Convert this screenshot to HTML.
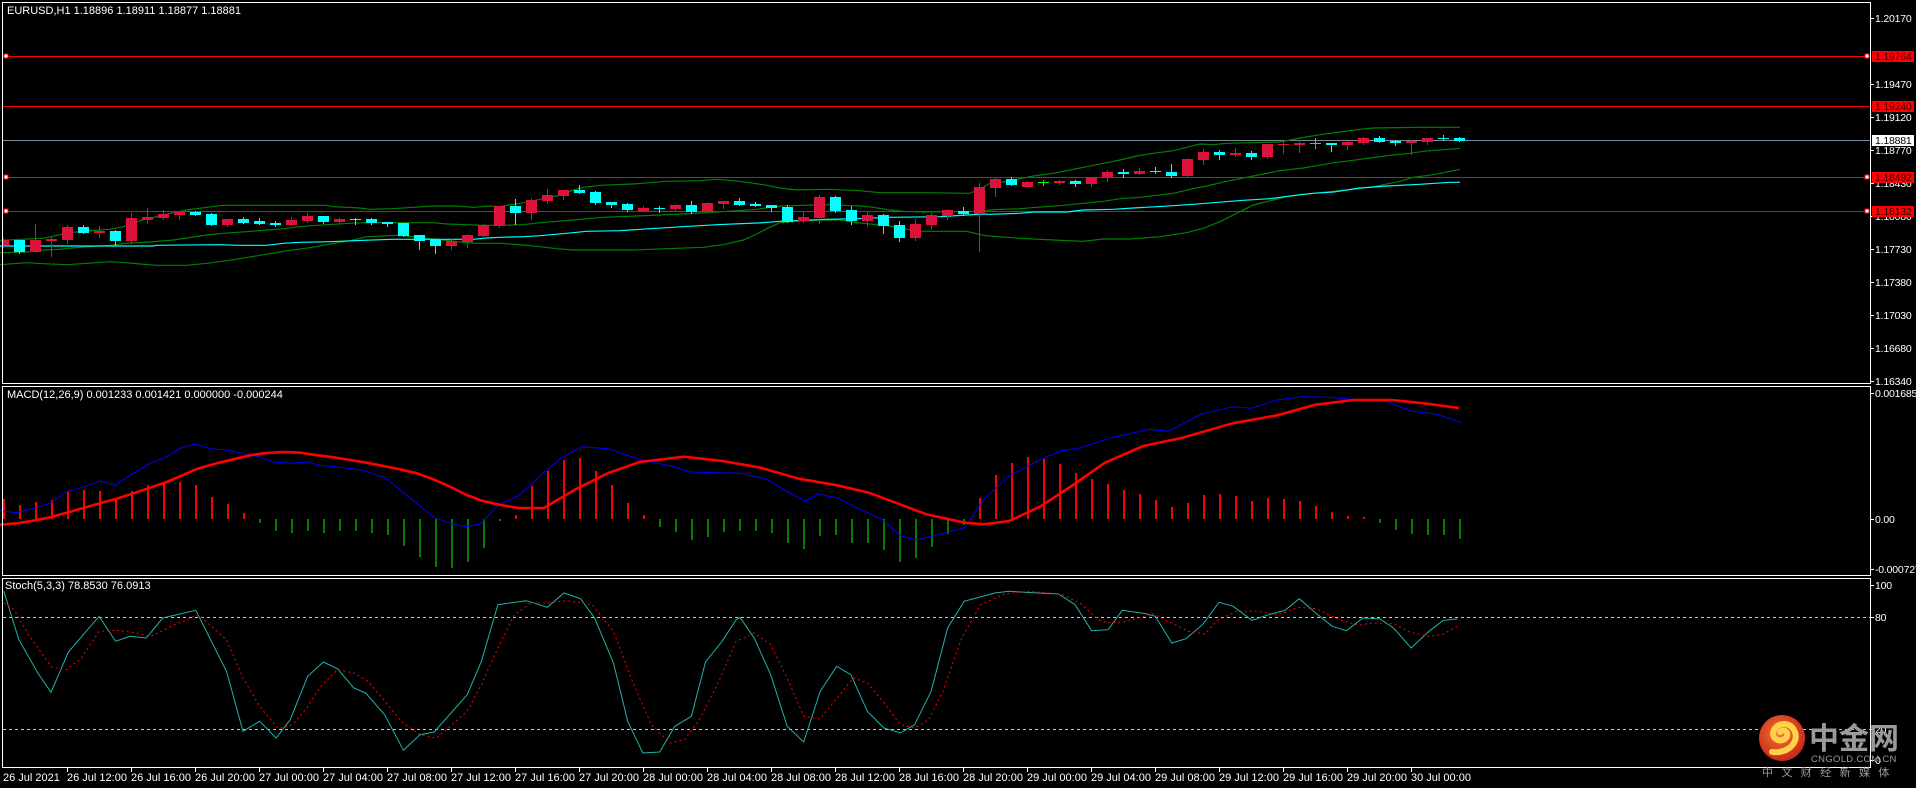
<!DOCTYPE html>
<html><head><meta charset="utf-8">
<style>
html,body{margin:0;padding:0;background:#000;width:1916px;height:788px;overflow:hidden}
svg{display:block}
text{font-family:"Liberation Sans","Noto Sans CJK SC",sans-serif;font-size:11px;fill:#fff}
text.ax{font-size:10.5px;letter-spacing:-0.2px}
</style></head>
<body>
<svg id="s" width="1916" height="788" xmlns="http://www.w3.org/2000/svg">
<rect width="1916" height="788" fill="#000"/>
<g id="g"></g>
<g fill="none" stroke="#fff" stroke-width="1">
<rect x="2.5" y="2.5" width="1868" height="381"/>
<rect x="2.5" y="386.5" width="1868" height="189"/>
<rect x="2.5" y="578.5" width="1868" height="189"/>
</g>
<text x="7" y="14">EURUSD,H1  1.18896 1.18911 1.18877 1.18881</text>
<text x="7" y="398">MACD(12,26,9) 0.001233 0.001421 0.000000 -0.000244</text>
<text x="5" y="589">Stoch(5,3,3) 78.8530 76.0913</text>
<defs><radialGradient id="lg" cx="0.45" cy="0.4" r="0.6"><stop offset="0" stop-color="#f07a2a"/><stop offset="1" stop-color="#c8281a"/></radialGradient></defs>
<circle cx="1782" cy="738" r="23" fill="url(#lg)"/>
<path d="M1772 752 C1790 754 1800 740 1794 730 C1790 722 1778 722 1774 730 C1770 738 1780 744 1786 738 C1790 733 1784 728 1780 732" fill="none" stroke="#ffd04a" stroke-width="6" stroke-linecap="round"/>
<text x="1809" y="749" style="font-size:30px;font-weight:bold;fill:#9a9a9a">中金网</text>
<text x="1811" y="762" style="font-size:9.5px;fill:#9a9a9a;letter-spacing:0.3px">CNGOLD.COM.CN</text>
<text x="1762" y="776" style="font-size:11px;fill:#9a9a9a;letter-spacing:8.4px">中文财经新媒体</text>
</svg>
<script>
var G=document.getElementById('g'),h='';
function L(x1,y1,x2,y2,c,w,extra){h+='<line x1="'+x1+'" y1="'+y1+'" x2="'+x2+'" y2="'+y2+'" stroke="'+c+'" stroke-width="'+(w||1)+'" '+(extra||'')+'/>';}
function R(x,y,w,hh,c){h+='<rect x="'+x+'" y="'+y+'" width="'+w+'" height="'+hh+'" fill="'+c+'"/>';}
function T(x,y,t,c,cls){h+='<text x="'+x+'" y="'+y+'"'+(cls?' class="'+cls+'"':'')+(c?' style="fill:'+c+'"':'')+'>'+t+'</text>';}
function P(pts,c,w,extra){var d=pts.map(function(p,i){return (i?'L':'M')+p[0].toFixed(1)+' '+p[1].toFixed(1)}).join('');h+='<path d="'+d+'" fill="none" stroke="'+c+'" stroke-width="'+(w||1)+'" '+(extra||'')+'/>';}
function conv(a,ox,sx,oy,sy){var r=[];for(var i=0;i<a.length;i+=2)r.push([ox+a[i]/sx,oy+a[i+1]/sy]);return r;}
function merge(){var r=[];for(var i=0;i<arguments.length;i++)r=r.concat(arguments[i]);r.sort(function(a,b){return a[0]-b[0]});return r;}

L(3,140.5,1870,140.5,'#778899');
[56,106,177,211].forEach(function(y){L(3,y+0.5,1870,y+0.5,'#ff0000');});
[56,177,211].forEach(function(y){h+='<rect x="4" y="'+(y-2)+'" width="4" height="4" fill="#fff" stroke="#f00"/>';h+='<rect x="1865" y="'+(y-2)+'" width="4" height="4" fill="#fff" stroke="#f00"/>';});

var z7={u:[0,211,130,205,200,190,250,183,330,178,370,170,420,152,470,140,520,128,560,120,620,112,670,106,850,106,980,106,1000,110,1080,114,1110,118,1180,116,1240,112,1300,108,1370,108,1420,112,1470,108],
m:[0,248,80,246,130,240,180,238,240,232,330,226,380,220,450,216,520,210,620,195,670,190,740,185,800,180,850,176,900,170,950,166,1050,160,1100,158,1300,158,1340,162,1450,166],
l:[0,284,80,278,130,281,200,284,260,280,330,275,380,278,420,282,470,286,560,286,620,280,680,272,720,266,780,256,850,244,930,233,990,222,1050,212,1100,200,1190,196,1240,200,1290,206,1330,210,1380,216,1430,220],
a:[0,228,460,228,470,226,660,224,710,226,800,226,850,220,900,217,990,215,1090,211,1180,208,1420,208,1460,204]};
var z8={u:[30,110,50,106,100,98,150,88,200,78,250,60,280,52,330,46,430,42,530,34,630,32,680,28,730,32,780,38,830,46,870,54,920,60,1010,58,1110,62,1170,68,1300,68,1440,70,1480,52],
m:[30,166,100,164,150,158,250,150,340,142,440,138,580,132,680,126,740,122,800,118,870,108,1000,104,1060,106,1110,108,1150,112,1200,120,1240,124,1300,126,1480,124],
l:[30,220,100,225,150,230,200,236,250,240,430,240,530,236,640,232,700,224,760,210,800,192,830,176,870,158,920,154,1000,150,1050,150,1100,158,1200,168,1280,184,1430,184,1480,196],
a:[30,202,100,200,150,197,230,190,290,184,390,182,480,176,580,170,680,164,820,158,870,154,1010,148,1100,146,1200,142,1350,140,1480,132]};
var z9={u:[30,190,70,186,120,176,160,168,220,160,270,150,320,140,370,130,420,120,470,108,520,100,580,92,620,82,660,72,700,74,740,70,820,68,900,66,960,54,1020,44,1080,36,1140,28,1180,24,1320,22,1440,22],
m:[30,270,70,268,120,266,170,262,250,256,310,250,370,244,420,236,480,232,530,226,580,220,630,208,680,198,740,184,800,172,850,162,900,152,970,144,1050,130,1110,122,1170,114,1230,106,1290,100,1330,94,1440,85],
l:[30,348,120,355,220,360,310,364,370,357,450,357,540,350,620,338,670,325,720,305,770,280,820,255,880,240,920,230,1000,220,1100,210,1180,200,1260,184,1300,172,1360,164,1440,148],
a:[30,283,120,280,160,276,260,276,310,270,400,268,460,264,550,259,640,253,700,248,790,241,870,236,900,232,960,224,1000,220,1060,216,1140,204,1220,198,1320,193,1410,187,1440,187]};
['u','m','l'].forEach(function(k){P(merge(conv(z7[k],0,3,170,3),conv(z8[k],490,3,170,3),conv(z9[k],980,3,120,3)),'#008000',1.2);});
P(merge(conv(z7.a,0,3,170,3),conv(z8.a,490,3,170,3),conv(z9.a,980,3,120,3)),'#00ffff',1.2);

var C=[['r',210,225,205,232],['c',210,245,210,248],['r',210,245,162,245],['r',207,213,200,258],['r',171,210,165,218],['c',171,189,165,189],['r',183,189,168,200],['c',183,213,180,225],['r',144,213,129,220],['r',141,150,114,159],
['r',132,144,120,147],['r',125,135,125,147],['c',125,135,122,135],['c',132,165,129,165],['r',147,165,147,168],['c',147,159,141,159],['c',153,162,144,162],['c',159,165,153,168],['r',150,165,141,165],['r',138,153,129,156],
['c',138,156,138,159],['r',147,156,144,159],['c',147,150,144,162],['c',147,159,144,162],['c',156,162,156,168],['c',159,198,159,198],['c',195,213,195,237],['c',207,228,207,249],['r',213,228,204,237],['r',195,216,192,231],
['r',165,198,162,204],['r',108,168,108,171],['c',108,129,87,162],['r',90,129,84,147],['r',75,93,57,99],['r',60,78,60,87],['c',60,69,45,69],['c',66,99,63,102],['c',96,105,96,111],['c',102,120,99,123],
['r',114,123,108,123],['c',114,117,108,126],['r',105,117,102,120],['c',105,126,93,129],['r',99,126,96,126],['r',93,102,93,114],['c',93,105,84,105],['c',102,108,96,108],['c',105,114,105,123],['c',111,156,105,156],
['r',141,153,126,156],['r',81,144,75,159],['c',81,123,78,126],['c',120,153,108,162],['r',135,153,126,168],['c',135,168,132,189],['c',165,204,153,213],['r',162,204,147,210],['r',135,165,129,174],['r',120,138,117,147],
['c',123,132,111,135],['r',51,132,39,243],
['r',177,204,171,228],['c',177,195,171,195],['r',186,201,183,201],['g',186,188,180,194],['r',183,189,180,192],['c',183,192,180,198],['r',171,192,171,198],['r',156,171,150,183],['c',156,162,147,171],['r',153,162,144,162],
['c',153,156,141,159],['c',156,168,132,171],['r',117,168,114,168],['r',96,120,87,132],['c',96,105,90,117],['r',99,105,84,108],['c',99,111,93,117],['r',72,111,72,114],['r',72,75,66,99],['r',69,75,60,96],
['g',69,71,54,84],['c',69,75,69,93],['r',66,75,63,87],['r',54,69,51,72],['c',54,66,48,66],['c',63,69,60,75],['r',63,69,60,102],['r',54,66,54,72],['c',54,57,45,60],['c',54,63,51,63]];
var col={r:'#dc143c',c:'#00ffff',g:'#00ff00'};
C.forEach(function(d,i){var oy=i<=61?170:120;var x=3+16*i;var bt=oy+d[1]/3,bb=oy+d[2]/3,wt=oy+d[3]/3,wb=oy+d[4]/3;var c=col[d[0]];
 L(x+0.5,Math.round(wt),x+0.5,Math.round(wb)+1,c);
 var y1=Math.round(bt),y2=Math.max(Math.round(bb),y1+1);
 if(d[0]=='g'){L(x-5,y1+0.5,x+6,y1+0.5,c);}else R(Math.max(3,x-5),y1,x<8?x+6-3:11,y2-y1,c);});

var H=[499,505,502,500,491,490,491,499,491,485,482,482,485,497,504,513,523,531,533,531,533,531,531,533,535,546,557,567,568,562,548,521,515,486,471,460,458,471,485,503,515,527,532,540,537,532,531,531,533,543,549,536,535,543,543,550,562,558,547,534,525,498,475,463,457,459,464,473,479,484,490,494,500,507,503,495,494,496,501,498,499,501,506,512,516,517,523,530,534,535,535,539];
H.forEach(function(y,i){var x=3+16*i;if(y<519)R(x,y,2,519-y,'#ff0000');else R(x,519,2,y-519,'#008000');});
var mb=merge(conv([0,422,50,428,100,415,150,400,200,365,250,350,300,333,345,346,400,310,450,280,500,260,540,235,585,222,630,236,680,240,720,248,780,262,820,276,870,280,920,276,960,286,1000,290,1060,296,1100,304,1160,326,1200,360,1250,400,1300,440,1350,460,1400,470,1440,462],0,3,370,3),
conv([0,415,30,355,60,330,100,260,130,212,160,182,200,188,250,220,300,240,330,258,370,260,410,262,450,280,480,315,510,345,530,325,560,335,590,365,630,400,660,450,685,462,720,445,760,425,790,340,830,270,880,220,910,195,940,186,990,155,1050,130,1080,136,1130,85,1180,62,1210,67,1250,42,1290,32,1330,34,1380,42,1420,45,1460,75,1500,85,1540,110],480,1.568,386,3));
var mr=merge(conv([0,464,50,460,100,452,150,442,200,428,250,414,300,400,350,386,400,370,450,353,500,336,550,315,590,297,650,280,700,268,750,256,790,250,850,246,900,248,940,254,1000,262,1050,270,1100,278,1150,288,1200,298,1250,310,1300,328,1350,350,1400,375,1440,390],0,3,370,3),
conv([0,343,30,356,60,366,100,366,150,310,200,262,250,228,320,212,380,225,440,245,500,278,560,298,610,320,660,356,700,385,760,410,790,415,830,405,880,360,930,297,980,230,1040,180,1100,156,1180,112,1250,88,1310,56,1370,42,1430,42,1480,52,1535,66],480,1.568,386,3));
P(mb,'#0000ff',1);P(mr,'#ff0000',2.6);

L(3,617.5,1870,617.5,'#c8c8c8',1,'stroke-dasharray="3,3"');L(3,729.5,1870,729.5,'#c8c8c8',1,'stroke-dasharray="3,3"');
var sm=merge(conv([8,40,40,185,80,285,108,343,145,222,210,115,245,190,275,175,310,180,345,120,415,97,480,280,515,460,550,430,585,480,615,425,652,295,685,252,715,272,750,330,775,345,815,410,855,517,890,470,920,462,990,350,1020,250,1055,80,1115,68,1160,88,1195,45,1230,62,1260,120,1300,255,1330,430,1362,525,1398,522,1430,445,1465,415,1495,252,1530,190,1560,125],0,2.119,578,3),
conv([0,118,30,180,65,290,100,445,135,492,170,340,205,265,235,290,270,400,305,450,340,465,370,440,405,340,440,150,475,70,540,45,570,40,630,45,675,48,710,80,745,158,780,155,810,97,860,107,880,115,915,195,945,182,980,140,1015,73,1045,85,1085,127,1120,110,1155,97,1185,62,1220,105,1255,145,1285,158,1320,120,1355,122,1385,150,1422,210,1460,160,1490,127,1520,123],740,2.119,578,3));
var ss=merge(conv([8,75,30,95,60,170,110,268,140,275,170,245,210,160,250,157,290,165,320,175,370,140,420,110,480,185,515,300,550,385,590,452,620,440,650,390,680,325,715,275,750,285,780,310,810,360,850,430,890,470,925,480,950,450,990,400,1020,320,1050,225,1090,110,1125,75,1160,75,1200,68,1255,80,1300,160,1340,310,1380,440,1420,495,1450,485,1480,430,1520,320,1560,190],0,2.119,578,3),
conv([0,185,30,165,65,200,100,300,135,415,170,423,200,370,240,300,270,315,300,365,340,440,370,450,400,425,430,340,470,180,510,80,560,48,610,40,680,48,720,75,760,125,780,135,820,130,875,107,900,125,950,160,985,168,1010,130,1050,100,1095,100,1140,110,1185,88,1220,92,1270,125,1310,142,1340,135,1385,137,1420,163,1460,175,1490,168,1520,145],740,2.119,578,3));
P(sm,'#20b2aa',1);P(ss,'#ff0000',1,'stroke-dasharray="2,3"');

[['1.20170',18],['1.19470',84],['1.19120',117],['1.18770',150],['1.18430',183],['1.18080',216],['1.17730',249],['1.17380',282],['1.17030',315],['1.16680',348],['1.16340',381],['0.001685',393],['0.00',519],['-0.000727',569],['100',585],['80',617],['20',729],['0',760]].forEach(function(a){L(1871,a[1]+0.5,1874,a[1]+0.5,'#fff');T(1875,a[1]+4,a[0],null,'ax');});
[['1.19764',56],['1.19240',106],['1.18492',177],['1.18132',211]].forEach(function(a){R(1872,a[1]-5,42,11,'#ff0000');T(1875,a[1]+4,a[0],'#300','ax');});
R(1872,135,42,11,'#fff');T(1875,144,'1.18881','#000','ax');

T(3,781,'26 Jul 2021');
var days=['26','27','28','29','30'];
for(var k=0;k<=21;k++){var x=67+64*k;var hr=(12+4*k);var d=Math.floor(hr/24);hr=hr%24;L(x+0.5,768,x+0.5,772,'#fff');T(x,781,days[d]+' Jul '+(hr<10?'0':'')+hr+':00');}
G.innerHTML=h;
</script>
</body></html>
